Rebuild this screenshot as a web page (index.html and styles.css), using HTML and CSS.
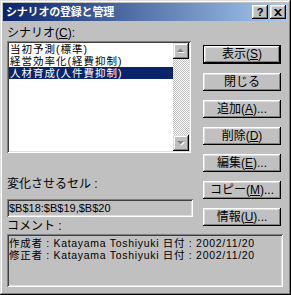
FILE: index.html
```html
<!DOCTYPE html>
<html lang="ja">
<head>
  <meta charset="UTF-8" />
  <title>シナリオの登録と管理</title>
  <link rel="stylesheet" href="styles.css">
</head>
<body>
  <div class="window">
    <div class="titlebar">
      <span class="title">シナリオの登録と管理</span>
      <div class="caption-btns">
        <div class="cap-btn">?</div>
        <div class="cap-btn close">
          <svg width="8" height="7" viewBox="0 0 8 7">
            <path d="M0 0h2l2 2 2-2h2L5 3.5 8 7H6L4 5 2 7H0l3-3.5z" fill="#000"/>
          </svg>
        </div>
      </div>
    </div>

    <div class="client">
      <div class="main">
        <div class="left">
          <div class="label">シナリオ(<u>C</u>):</div>
          <div class="listbox">
            <ul class="items">
              <li>当初予測(標準)</li>
              <li>経営効率化(経費抑制)</li>
              <li class="selected">人材育成(人件費抑制)</li>
            </ul>
            <div class="scrollbar">
              <div class="sb-btn">
                <svg width="12" height="12" viewBox="0 0 12 12">
                  <path d="M3 8h7L6.5 4.5z" fill="#fff"/>
                  <path d="M2 7h7L5.5 3.5z" fill="#808080"/>
                </svg>
              </div>
              <div class="sb-track"></div>
              <div class="sb-btn">
                <svg width="12" height="12" viewBox="0 0 12 12">
                  <path d="M3 5h7L6.5 8.5z" fill="#fff"/>
                  <path d="M2 4h7L5.5 7.5z" fill="#808080"/>
                </svg>
              </div>
            </div>
          </div>
          <div class="label cells-label">変化させるセル :</div>
          <div class="field">$B$18:$B$19,$B$20</div>
          <div class="label comment-label">コメント :</div>
        </div>

        <div class="buttons">
          <div class="btn default">表示(<u>S</u>)</div>
          <div class="btn">閉じる</div>
          <div class="btn">追加(<u>A</u>)...</div>
          <div class="btn">削除(<u>D</u>)</div>
          <div class="btn">編集(<u>E</u>)...</div>
          <div class="btn">コピー(<u>M</u>)...</div>
          <div class="btn">情報(<u>U</u>)...</div>
        </div>
      </div>

      <div class="comment">
        <div>作成者 : Katayama Toshiyuki 日付 : 2002/11/20</div>
        <div>修正者 : Katayama Toshiyuki 日付 : 2002/11/20</div>
      </div>
    </div>
  </div>
</body>
</html>
```

FILE: styles.css
```css
/* Classic Windows dialog */
body {
  margin: 0;
  background: #c0c0c0;
  font-family: "Liberation Sans", "Noto Sans CJK JP", sans-serif;
  font-size: 12px;
  color: #000;
}

.window {
  width: 291px;
  height: 295px;
  box-sizing: border-box;
  padding: 3px;
  background: #c0c0c0;
  box-shadow: inset -1px -1px #000, inset 1px 1px #dfdfdf,
              inset -2px -2px #808080, inset 2px 2px #fff;
}

.titlebar {
  height: 18px;
  display: flex;
  align-items: center;
  justify-content: space-between;
  padding: 0 2px 0 3px;
  background: linear-gradient(to right, #0a246a, #a6caf0);
}

.title {
  color: #fff;
  font-weight: bold;
  font-size: 11px;
  line-height: 18px;
  letter-spacing: -0.2px;
}

.caption-btns {
  display: flex;
  gap: 2px;
}

.cap-btn {
  width: 16px;
  height: 14px;
  box-sizing: border-box;
  background: #c0c0c0;
  box-shadow: inset -1px -1px #000, inset 1px 1px #fff,
              inset -2px -2px #808080, inset 2px 2px #dfdfdf;
  display: flex;
  align-items: center;
  justify-content: center;
  font-weight: bold;
  font-size: 11px;
  line-height: 14px;
}

.client {
  padding: 5px 0 0 4px;
}

.main {
  display: flex;
  gap: 10px;
}

.left {
  width: 186px;
}

.label {
  line-height: 15px;
  height: 15px;
}

.listbox {
  width: 184px;
  height: 112px;
  box-sizing: border-box;
  padding: 2px;
  background: #fff;
  box-shadow: inset 1px 1px #808080, inset -1px -1px #fff,
              inset 2px 2px #404040, inset -2px -2px #dfdfdf;
  display: flex;
}

.items {
  flex: 1;
  margin: 0;
  padding: 0;
  list-style: none;
}

.items li {
  height: 12px;
  line-height: 12px;
  font-size: 10.5px;
  letter-spacing: 1px;
  padding-left: 1px;
  white-space: nowrap;
}

.items li.selected {
  background: #0a246a;
  color: #fff;
}

.scrollbar {
  width: 16px;
  display: flex;
  flex-direction: column;
}

.sb-btn {
  height: 16px;
  box-sizing: border-box;
  background: #c0c0c0;
  box-shadow: inset -1px -1px #000, inset 1px 1px #dfdfdf,
              inset -2px -2px #808080, inset 2px 2px #fff;
  display: flex;
  align-items: center;
  justify-content: center;
}

.sb-track {
  flex: 1;
  background: conic-gradient(#fff 25%, #c0c0c0 0 50%, #fff 0 75%, #c0c0c0 0) 0 0 / 2px 2px;
}

.cells-label {
  margin-top: 24px;
  line-height: 14px;
  height: 14px;
}

.field {
  margin-top: 8px;
  height: 18px;
  box-sizing: border-box;
  padding: 0 2px;
  line-height: 18px;
  font-size: 11px;
  background: #c0c0c0;
  box-shadow: inset 1px 1px #808080, inset -1px -1px #fff,
              inset 2px 2px #404040, inset -2px -2px #dfdfdf;
}

.comment-label {
  margin-top: 2px;
  line-height: 14px;
  height: 14px;
}

.buttons {
  padding-top: 19px;
  display: flex;
  flex-direction: column;
  gap: 9px;
}

.btn {
  width: 78px;
  height: 18px;
  box-sizing: border-box;
  background: #c0c0c0;
  box-shadow: inset -1px -1px #000, inset 1px 1px #fff,
              inset -2px -2px #808080, inset 2px 2px #dfdfdf;
  text-align: center;
  line-height: 18px;
}

.btn.default {
  height: 19px;
  line-height: 17px;
  border: 1px solid #000;
}

.comment {
  margin-top: 1px;
  width: 276px;
  height: 53px;
  box-sizing: border-box;
  padding: 3px 2px;
  line-height: 12px;
  font-size: 10.5px;
  letter-spacing: 0.7px;
  background: #c0c0c0;
  box-shadow: inset 1px 1px #808080, inset -1px -1px #fff,
              inset 2px 2px #404040, inset -2px -2px #dfdfdf;
  white-space: nowrap;
}
```
